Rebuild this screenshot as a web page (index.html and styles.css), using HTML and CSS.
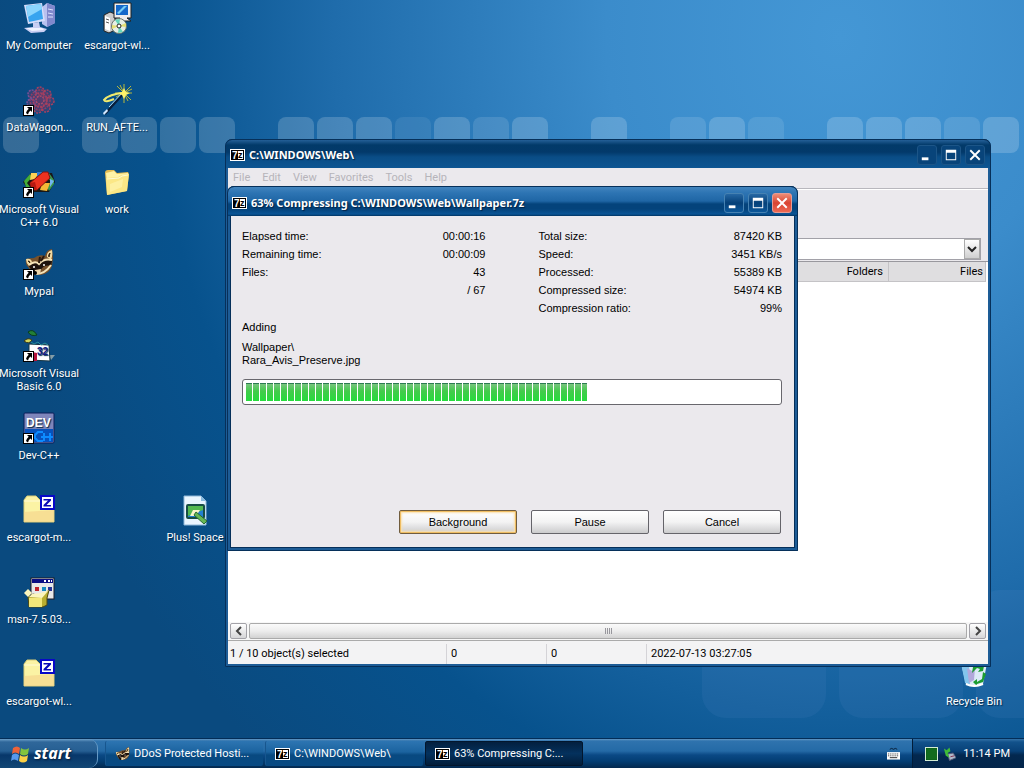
FILE: index.html
```html
<!DOCTYPE html>
<html lang="en">

<head>
    <meta charset="UTF-8">
    <meta name="viewport" content="width=device-width, initial-scale=1.0">
    <title>Desktop</title>
    <link rel="stylesheet" href="styles.css">
</head>

<body>
    <!-- Shared icons -->
    <svg class="defs" aria-hidden="true">
        <symbol id="shortcut" viewBox="0 0 11 11">
            <rect x="0.5" y="0.5" width="10" height="10" fill="#fff" stroke="#000" />
            <path d="M4 2h5v5L7.400 5.400Q5.500 7 5 9.500L3 8Q3.500 5.500 5.700 3.800z" fill="#000" />
        </symbol>
        <symbol id="seven-zip" viewBox="0 0 15 12">
            <rect width="15" height="12" fill="#fff" />
            <rect x="1" y="1" width="13" height="10" fill="#000" />
            <rect x="8" y="2" width="5" height="8" fill="#fff" />
            <text x="2" y="10" font-size="10" fill="#fff">7</text>
            <text x="8" y="9" font-size="9" fill="#000">z</text>
        </symbol>
        <symbol id="raccoon" viewBox="0 0 30 28">
            <path d="M2 10Q1 15 4 18l4 6 9 2q9-2 11-9l1-8-1-9q-6 1-7 7-6-2-11 2Q6 9 2 10z" fill="#76512c" />
            <path d="M2 10q5-1 6 3l-3 4q-3-3-3-7zM28 1q-6 2-5 7l4 3q2-5 1-10z" fill="#f1d9a0" />
            <path d="M4 12q2 0 2 2zM26 4q-2 2-1 4z" stroke="#3a2513" />
            <path d="M5 17q5-6 10-2 7-6 13-3l-1 5q-7-2-11 5l-7 2z" fill="#1d120c" />
            <path d="M5 16q6-5 10-1 5-6 13-4M12 25q9 0 15-9" fill="none" stroke="#f5e3b8" stroke-width="2" />
            <path d="M16 8l-1 6M20 7l-3 5" stroke="#2b190e" stroke-width="2" />
            <path d="M11 21l6-1-1 5-6 1z" fill="#eed7ad" />
            <circle cx="11" cy="24" r="2" fill="#000" />
            <circle cx="10" cy="18" r="1" fill="#fff" />
            <circle cx="20" cy="16" r="1" fill="#fff" />
        </symbol>
        <symbol id="zip-folder" viewBox="0 0 32 32">
            <path d="M1 28V6l3-4h9l4 4h14v22z" fill="#fbf3a4" stroke="#d9cc77" />
            <path d="M1 18l30-2v12H1z" fill="#f5d68d" opacity=".7" />
            <path d="M1 7h17" stroke="#fffbd8" />
            <rect x="18" y="2" width="13" height="13" fill="#fff" stroke="#0808c8" stroke-width="2" />
            <path d="M20.500 5H28v1.500L23.500 11H28v1.500H20.500V11L25 6.500h-4.500z" fill="#0808b8" />
        </symbol>
        <symbol id="minimize" viewBox="0 0 19 19">
            <rect x="4" y="12" width="7" height="3" fill="#fff" />
        </symbol>
        <symbol id="maximize" viewBox="0 0 19 19">
            <path d="M4 4h11v11H4zM5 7v7h9V7z" fill="#fff" fill-rule="evenodd" />
        </symbol>
        <symbol id="close" viewBox="0 0 19 19">
            <path d="M4.500 4.500l10 10M14.500 4.500l-10 10" stroke="#fff" stroke-width="2" />
        </symbol>
    </svg>

    <main class="desktop">
        <svg class="wallpaper" viewBox="0 0 1024 739" preserveAspectRatio="xMidYMin slice" aria-hidden="true">
            <g fill="#fff" fill-opacity=".18">
                <rect x="3" y="117" width="36" height="36" rx="8" />
                <rect x="82" y="117" width="36" height="36" rx="8" />
                <rect x="121" y="117" width="36" height="36" rx="8" />
                <rect x="160" y="117" width="36" height="36" rx="8" />
                <rect x="199" y="117" width="36" height="36" rx="8" />
                <rect x="278" y="117" width="36" height="36" rx="8" />
                <rect x="317" y="117" width="36" height="36" rx="8" />
                <rect x="356" y="117" width="36" height="36" rx="8" />
                <rect x="395" y="117" width="36" height="36" rx="8" fill-opacity=".08" />
                <rect x="434" y="117" width="36" height="36" rx="8" />
                <rect x="473" y="117" width="36" height="36" rx="8" fill-opacity=".12" />
                <rect x="512" y="117" width="36" height="36" rx="8" />
                <rect x="591" y="117" width="36" height="36" rx="8" />
                <rect x="670" y="117" width="36" height="36" rx="8" fill-opacity=".12" />
                <rect x="709" y="117" width="36" height="36" rx="8" />
                <rect x="748" y="117" width="36" height="36" rx="8" fill-opacity=".1" />
                <rect x="827" y="117" width="36" height="36" rx="8" />
                <rect x="866" y="117" width="36" height="36" rx="8" />
                <rect x="905" y="117" width="36" height="36" rx="8" />
                <rect x="944" y="117" width="36" height="36" rx="8" fill-opacity=".12" />
                <rect x="983" y="117" width="36" height="36" rx="8" />
            </g>
            <g fill="#5d8ac8" fill-opacity=".13">
                <rect x="702" y="590" width="124" height="128" rx="24" />
                <rect x="839" y="590" width="124" height="128" rx="24" />
                <rect x="976" y="590" width="124" height="128" rx="24" />
            </g>
        </svg>

        <div class="icons">
            <a class="icon" href="#">
                <svg viewBox="0 0 32 32">
                    <path d="M19 5l5-4 8 3v17l-8 4-5-3z" fill="#b9c1ef" />
                    <path d="M24 1l8 3v17l-8 4z" fill="#8088cc" />
                    <path d="M25 7l5 1M25 11l5 1M25 15l5 0" stroke="#dce2ff" />
                    <path d="M1 3l18-2 3 18-17 3z" fill="#d5ddfa" />
                    <path d="M3 4l15-2 2 15-14 3z" fill="#38a4ef" />
                    <path d="M3 4l15-2 1 5L5 15z" fill="#8bd5fd" />
                    <path d="M10 21l6-1 1 5 7 2-3 3-13 1-7-5 9-1z" fill="#c9cef3" />
                    <path d="M3 26l16 0 2 2-12 1z" fill="#f1f3ff" />
                </svg>
                <span>My Computer</span>
            </a>
            <a class="icon" href="#">
                <svg viewBox="0 0 32 32">
                    <path d="M3 13l6-3 5 2v16l-6 3-5-2z" fill="#ccc" stroke="#222" />
                    <path d="M4 14l5 2v13l-5-2z" fill="#fff" />
                    <path d="M5 17l3 1M5 20l3 1" stroke="#555" />
                    <path d="M13 1h17v15h-4l4 3H16l3-3h-6z" fill="#eee" stroke="#222" />
                    <path d="M15 3h12v10H15z" fill="#1469cb" />
                    <path d="M16 11l7-7h3l-8 8z" fill="#77cff7" />
                    <circle cx="18" cy="24" r="7.500" fill="#e7eee5" stroke="#67736b" />
                    <path d="M18 24l-4-6 5-1zM18 24l4 6-5 1z" fill="#64d7ba" />
                    <path d="M18 24l7-3v4zM18 24l-7 3v-4z" fill="#e4df73" />
                    <circle cx="18" cy="24" r="2" fill="#fff" stroke="#222" />
                </svg>
                <span>escargot-wl...</span>
            </a>
            <a class="icon" href="#">
                <svg viewBox="0 0 32 32">
                    <g fill="#6f3a68" fill-opacity=".4" stroke="#a8405f" stroke-width="1.500" stroke-dasharray="2 1">
                        <circle cx="17" cy="16" r="10" />
                        <circle cx="17" cy="16" r="4" stroke="#d8556a" />
                        <circle cx="17" cy="7" r="4" />
                        <circle cx="24" cy="10" r="4" />
                        <circle cx="27" cy="17" r="4" />
                        <circle cx="23" cy="24" r="4" />
                        <circle cx="15" cy="25" r="4" />
                        <circle cx="8" cy="19" r="4" stroke="#7b5198" />
                        <circle cx="9" cy="10" r="4" stroke="#7b5198" />
                        <circle cx="17" cy="16" r="7" />
                    </g>
                    <use href="#shortcut" x="0" y="21" width="11" height="11" />
                </svg>
                <span>DataWagon...</span>
            </a>
            <a class="icon" href="#">
                <svg viewBox="0 0 32 32">
                    <path d="M23 0v19M14 9h17M16 2l14 14M30 2L16 16M19 1l8 16M31 5l-16 8" stroke="#b8b83b" />
                    <path d="M23 9L4 30" stroke="#0a1d38" stroke-width="2" />
                    <path d="M21 9L8 23" stroke="#a9d3ed" />
                    <path d="M2 29l4-4 1 2-4 4z" fill="#d2e8ff" />
                    <path d="M23 9Q8 10 3 16q1 3 10-1" fill="none" stroke="#f1ea6d" stroke-width="2" />
                    <path d="M23 4l2 4 4 1-4 2-2 4-2-4-4-2 4-1z" fill="#fff36b" />
                </svg>
                <span>RUN_AFTE...</span>
            </a>
            <a class="icon" href="#">
                <svg viewBox="0 0 32 32">
                    <path d="M0 16l8-9h21l3 9-6 10H7z" fill="#181818" />
                    <path d="M1 15l6-7 2 3-5 6 3 4-3 3z" fill="#43ad39" />
                    <path d="M8 7h8l-4 6-5 1z" fill="#ffd154" />
                    <path d="M14 6h6l-6 6z" fill="#2d79d1" />
                    <path d="M26 7l5 7v4l-5 7-2-4 4-5-4-6z" fill="#3a9851" />
                    <path d="M27 13l4 2-4 6z" fill="#72b5f1" />
                    <path d="M19 17h8l-3 8-7-1z" fill="#f4b937" />
                    <path d="M7 17L20 6h5l2 6L14 24H9z" fill="#eb3220" stroke="#81150d" />
                    <path d="M7 17l5-1 2 8H9z" fill="#b71912" />
                    <use href="#shortcut" x="0" y="21" width="11" height="11" />
                </svg>
                <span>Microsoft Visual<br>C++ 6.0</span>
            </a>
            <a class="icon" href="#">
                <svg viewBox="0 0 32 32">
                    <path d="M4 7q0-3 3-3h6l3 3 11-1 1 2-2 17-20 4z" fill="#e5bd54" />
                    <path d="M5 7l8-2 3 3 11-1v5L6 16z" fill="#fff3a7" />
                    <path d="M5 12l12-1 3-2 8-1-2 17-20 4z" fill="#fbe786" />
                    <path d="M6 13l12-1 3-2 6-1" fill="none" stroke="#fffbd5" />
                    <path d="M9 18l13-5-1 8-12 5z" fill="#fff7b6" opacity=".6" />
                </svg>
                <span>work</span>
            </a>
            <a class="icon" href="#">
                <svg viewBox="0 0 32 32">
                    <use href="#raccoon" x="1" y="1" width="30" height="28" />
                    <use href="#shortcut" x="0" y="21" width="11" height="11" />
                </svg>
                <span>Mypal</span>
            </a>
            <a class="icon" href="#">
                <svg viewBox="0 0 32 32">
                    <path d="M5 2q5-4 9 3-6 2-9-3z" fill="#237f36" stroke="#083c20" />
                    <path d="M1 11q4-4 8-1-3 5-8 1z" fill="#d5d75d" stroke="#383817" />
                    <path d="M26 25h6l-4 5z" fill="#849da8" />
                    <path d="M6 14l20 1 1 16-21-1z" fill="#fff" stroke="#173541" />
                    <path d="M8 12l3 2 4-2 3 3 4-2 3 2" fill="none" stroke="#288d99" stroke-width="1" />
                    <path d="M9 22l5 1v8H9z" fill="#b7143c" />
                    <text x="14" y="25" font-size="10" fill="#101780">32</text>
                    <use href="#shortcut" x="0" y="21" width="11" height="11" />
                </svg>
                <span>Microsoft Visual<br>Basic 6.0</span>
            </a>
            <a class="icon" href="#">
                <svg viewBox="0 0 32 32">
                    <rect x="1" y="1" width="30" height="30" rx="1" fill="#7f86bb" stroke="#0b1c58" />
                    <rect x="2" y="17" width="28" height="13" fill="#0752bd" />
                    <text x="3" y="15" font-size="12" fill="#fff">DEV</text>
                    <path d="M20 20h-5l-3 3v3l3 3h5M21 21v8M18 25h6M27 21v8M24 25h6" fill="none" stroke="#0d8bff" stroke-width="2" />
                    <use href="#shortcut" x="0" y="21" width="11" height="11" />
                </svg>
                <span>Dev-C++</span>
            </a>
            <a class="icon" href="#">
                <svg viewBox="0 0 32 32"><use href="#zip-folder" /></svg>
                <span>escargot-m...</span>
            </a>
            <a class="icon" href="#">
                <svg viewBox="0 0 32 32">
                    <rect x="8" y="2" width="23" height="21" fill="#e8e8e8" stroke="#1b1b29" />
                    <rect x="9" y="3" width="21" height="4" fill="#090d83" />
                    <path d="M21 5h2M25 5h2M28 5h1" stroke="#fff" stroke-width="2" />
                    <rect x="12" y="11" width="4" height="4" fill="#be222a" />
                    <rect x="19" y="11" width="4" height="4" fill="#168ac0" />
                    <rect x="25" y="11" width="4" height="4" fill="#263497" />
                    <path d="M5 21l5-3 8 2 8-6-2 8v7l-4 2H6z" fill="#b9ae30" stroke="#4c4710" />
                    <path d="M6 22h13v9H6z" fill="#f2e77a" />
                    <path d="M6 21l13 1 7-8-8 3-9 1zM1 17l4-4 4 4-4 4z" fill="#fbf5bd" />
                </svg>
                <span>msn-7.5.03...</span>
            </a>
            <a class="icon" href="#">
                <svg viewBox="0 0 32 32"><use href="#zip-folder" /></svg>
                <span>escargot-wl...</span>
            </a>
            <a class="icon plus-space" href="#">
                <svg viewBox="0 0 32 32">
                    <path d="M5 2h17l5 5v24H5z" fill="#e9f5ff" stroke="#91b9d9" />
                    <path d="M22 2l5 5h-5z" fill="#88badd" />
                    <rect x="8" y="11" width="17" height="13" rx="1" fill="#217fd0" stroke="#174d45" stroke-width="2" />
                    <path d="M9 12h15v4L9 22z" fill="#53b951" />
                    <path d="M14 16h7l-4 6h-6z" fill="#faf5ca" />
                    <path d="M17 18l11 9-3 3-10-9z" fill="#66b755" stroke="#276b35" />
                </svg>
                <span>Plus! Space</span>
            </a>
        </div>

        <a class="icon recycle-bin" href="#">
            <svg viewBox="0 0 32 32">
                <path d="M3 5h26l-4 21q-8 5-17 0z" fill="#dceaf7" />
                <path d="M3 5l8 1 1 21-5-2z" fill="#83c5ec" />
                <path d="M9 10l5 3 3-3-1 12-5 3z" fill="#b2a8db" />
                <path d="M14 15l5-5 3 1-2 3 5-1 1-5-4-1-1-3-6 5zM25 14l-1 7-5 3v-3l-4 3 4 4v-2l6-2 3-8z" fill="#1b9c30" />
                <path d="M8 26q8 4 17 0" fill="none" stroke="#fff" stroke-width="2" />
            </svg>
            <span>Recycle Bin</span>
        </a>

        <!-- File manager window -->
        <section class="window file-manager">
            <header class="title-bar inactive">
                <svg class="app-icon"><use href="#seven-zip" /></svg>
                <h1>C:\WINDOWS\Web\</h1>
                <div class="window-buttons">
                    <button aria-label="Minimize"><svg><use href="#minimize" /></svg></button>
                    <button aria-label="Maximize"><svg><use href="#maximize" /></svg></button>
                    <button aria-label="Close"><svg><use href="#close" /></svg></button>
                </div>
            </header>
            <nav class="menu-bar">
                <button disabled>File</button>
                <button disabled>Edit</button>
                <button disabled>View</button>
                <button disabled>Favorites</button>
                <button disabled>Tools</button>
                <button disabled>Help</button>
            </nav>
            <div class="tool-bar"></div>
            <div class="address-bar">
                <select aria-label="Address"><option></option></select>
                <span class="drop-arrow">
                    <svg viewBox="0 0 10 7"><path d="M1 1l4 4 4-4" fill="none" stroke="#222" stroke-width="2" /></svg>
                </span>
            </div>
            <div class="file-list">
                <table>
                    <thead>
                        <tr>
                            <td></td>
                            <th>Folders</th>
                            <th>Files</th>
                        </tr>
                    </thead>
                </table>
            </div>
            <div class="scroll-bar">
                <button aria-label="Scroll left"><svg viewBox="0 0 8 10"><path d="M6 1L2 5l4 4" fill="none" stroke="#444" stroke-width="2" /></svg></button>
                <div class="thumb"><i></i><i></i><i></i><i></i></div>
                <button aria-label="Scroll right"><svg viewBox="0 0 8 10"><path d="M2 1l4 4-4 4" fill="none" stroke="#444" stroke-width="2" /></svg></button>
            </div>
            <footer class="status-bar">
                <span>1 / 10 object(s) selected</span>
                <span>0</span>
                <span>0</span>
                <span>2022-07-13 03:27:05</span>
            </footer>
        </section>

        <!-- Compression progress window -->
        <section class="window progress-window">
            <header class="title-bar">
                <svg class="app-icon"><use href="#seven-zip" /></svg>
                <h1>63% Compressing C:\WINDOWS\Web\Wallpaper.7z</h1>
                <div class="window-buttons">
                    <button aria-label="Minimize"><svg><use href="#minimize" /></svg></button>
                    <button aria-label="Maximize"><svg><use href="#maximize" /></svg></button>
                    <button class="close" aria-label="Close"><svg><use href="#close" /></svg></button>
                </div>
            </header>
            <div class="progress-body">
                <div class="stats">
                    <dl>
                        <dt>Elapsed time:</dt>
                        <dd>00:00:16</dd>
                        <dt>Remaining time:</dt>
                        <dd>00:00:09</dd>
                        <dt>Files:</dt>
                        <dd>43</dd>
                        <dd>/ 67</dd>
                    </dl>
                    <dl>
                        <dt>Total size:</dt>
                        <dd>87420 KB</dd>
                        <dt>Speed:</dt>
                        <dd>3451 KB/s</dd>
                        <dt>Processed:</dt>
                        <dd>55389 KB</dd>
                        <dt>Compressed size:</dt>
                        <dd>54974 KB</dd>
                        <dt>Compression ratio:</dt>
                        <dd>99%</dd>
                    </dl>
                </div>
                <label class="action" for="progress">Adding</label>
                <p class="current-file">Wallpaper\<br>Rara_Avis_Preserve.jpg</p>
                <progress id="progress" value="43" max="67"></progress>
                <div class="actions">
                    <button class="default">Background</button>
                    <button>Pause</button>
                    <button>Cancel</button>
                </div>
            </div>
        </section>
    </main>

    <footer class="taskbar">
        <button class="start">
            <svg viewBox="0 0 20 20">
                <path d="M3 4q4-3 7 0L9 10q-4-3-7 0z" fill="#ee6339" />
                <path d="M11 4q4 3 8 0l-1 6q-4 3-8 0z" fill="#83c43d" />
                <path d="M2 11q3-3 7 0l-1 6q-4-3-7 0z" fill="#5799ec" />
                <path d="M10 11q4 3 8 0l-1 6q-4 3-8 0z" fill="#fbd044" />
            </svg>
            start
        </button>
        <div class="tasks">
            <button class="task">
                <svg><use href="#raccoon" /></svg>
                DDoS Protected Hosti...
            </button>
            <button class="task">
                <svg><use href="#seven-zip" /></svg>
                C:\WINDOWS\Web\
            </button>
            <button class="task active">
                <svg><use href="#seven-zip" /></svg>
                63% Compressing C:...
            </button>
        </div>
        <svg class="keyboard" viewBox="0 0 14 13">
            <path d="M3 2l2-1 2 1 2-1 2 1" fill="none" stroke="#071b32" />
            <rect y="5" width="14" height="8" fill="#fff" />
            <path d="M1 7h12M1 9h12" stroke="#222" stroke-dasharray="1 1" />
            <path d="M3 11h8" stroke="#222" />
        </svg>
        <div class="tray">
            <svg viewBox="0 0 13 14">
                <rect x="0.5" y="0.5" width="12" height="13" fill="#075b14" stroke="#d4ecd3" />
                <path d="M3 1v12M5 1v12M7 1v12M9 1v12M11 1v12M1 3h11M1 5h11M1 7h11M1 9h11M1 11h11" stroke="#27832c" stroke-width=".5" />
            </svg>
            <svg viewBox="0 0 14 14">
                <path d="M5 7l6-1 3 5-7 3z" fill="#aeb9ca" stroke="#515a76" />
                <path d="M8 10l4-1" stroke="#842c4a" />
                <path d="M1 1l3 2 3-3 1 4-3 2 2 5-4-2z" fill="#40bc38" />
            </svg>
            <time>11:14 PM</time>
        </div>
    </footer>
</body>

</html>
```
FILE: styles.css
```css
* {
    box-sizing: border-box;
}

body {
    display: flex;
    flex-direction: column;
    height: 100vh;
    margin: 0;
    overflow: hidden;
    font-family: Roboto, Tahoma, sans-serif;
    font-size: 11px;
    line-height: 13px;
    color: black;
}

button,
select {
    font: inherit;
    color: inherit;
    margin: 0;
    padding: 0;
    border: none;
    background: none;
}

svg text {
    font-family: "Liberation Sans", Arial, sans-serif;
    font-weight: bold;
}

.defs {
    display: none;
}

.desktop {
    position: relative;
    flex: 1;
    min-height: 0;
    background: radial-gradient(ellipse 76% 120% at 82% 5%, #4497d5 0%, #3b8ccb 30%, #1f6cab 65%, #07528d 88%, #0a4a7f 110%);
}

.wallpaper {
    position: absolute;
    width: 100%;
    height: 100%;
}

/* Desktop icons */
.icons {
    position: relative;
    display: grid;
    grid-template-columns: repeat(3, 78px);
    grid-auto-rows: 82px;
}

.icon {
    display: flex;
    flex-direction: column;
    align-items: center;
    gap: 5px;
    width: 78px;
    padding-top: 2px;
    color: white;
    text-align: center;
    text-decoration: none;
    text-shadow: 1px 1px 1px #032a4c;
    white-space: nowrap;
}

.icons .icon {
    grid-column: 1;
}

.icons .icon:nth-child(2),
.icons .icon:nth-child(4),
.icons .icon:nth-child(6) {
    grid-column: 2;
}

.icons .plus-space:last-child {
    grid-row: 7;
    grid-column: 3;
}

.icon svg {
    width: 32px;
    height: 32px;
}

.recycle-bin {
    position: absolute;
    right: 11px;
    bottom: 30px;
}

/* Windows */
.window {
    position: absolute;
    display: flex;
    flex-direction: column;
    border: 3px solid #1d5c96;
    border-top: none;
    border-radius: 7px 7px 0 0;
    background-color: #ebe9ed;
    outline: 1px solid #06305a;
    outline-offset: -1px;
}

.file-manager {
    top: 139px;
    right: 33px;
    bottom: 71px;
    left: 225px;
}

.progress-window {
    top: 186px;
    right: 226px;
    left: 227px;
    box-shadow: inset 0 0 0 1px #06305a;
}

.title-bar {
    display: flex;
    align-items: center;
    gap: 4px;
    height: 30px;
    margin: 0 -2px;
    padding: 2px 5px 0 4px;
    border-top: 1px solid #06305a;
    border-radius: 6px 6px 0 0;
    background: linear-gradient(#4284bd 0, #2d74b3 6px, #1f66a5 14px, #04437b 17px, #04437b 22px, #0a5596 27px, #003462 100%);
    color: white;
}

.title-bar.inactive {
    height: 29px;
    background: linear-gradient(#245f97 0, #023a69 5px, #03396a 12px, #0a4d86 17px, #0d5592 100%);
}

.title-bar h1 {
    flex: 1;
    margin: 0;
    font-family: "Noto Sans", Tahoma, sans-serif;
    font-size: 11px;
    line-height: 16px;
    text-shadow: 1px 1px 1px #022346;
}

.app-icon {
    width: 15px;
    height: 12px;
}

.window-buttons {
    display: flex;
    gap: 4px;
}

.window-buttons button {
    width: 20px;
    height: 20px;
    border: 1px solid #4682b2;
    border-radius: 3px;
    background: linear-gradient(#2668a4, #054078 50%, #0b579a);
}

.inactive .window-buttons button {
    border-color: #1c5587;
    background: #08447a;
}

.window-buttons svg {
    display: block;
    width: 18px;
    height: 18px;
}

.window-buttons .close {
    border-color: #e69b93;
    background: linear-gradient(#ee8c75, #d94432 50%, #ed6953);
}

.menu-bar {
    display: flex;
    gap: 12px;
    height: 21px;
    padding-left: 5px;
    border-bottom: 1px solid #b8b7bd;
    color: #b6b4ba;
}

.menu-bar button {
    height: 19px;
}

.tool-bar {
    height: 49px;
    border-top: 1px solid white;
}

.address-bar {
    position: relative;
    height: 23px;
    padding-right: 7px;
}

.address-bar select {
    display: block;
    width: 100%;
    height: 22px;
    border: 1px solid #a2a1a8;
    background-color: white;
    appearance: none;
}

.drop-arrow {
    position: absolute;
    top: 1px;
    right: 8px;
    display: flex;
    align-items: center;
    justify-content: center;
    width: 16px;
    height: 20px;
    border: 1px solid #aaa;
    background: linear-gradient(white, #cfcfcf);
    pointer-events: none;
}

.drop-arrow svg {
    width: 10px;
    height: 7px;
}

.file-list {
    flex: 1;
    padding-right: 2px;
    border-top: 1px solid #99989e;
    background-color: white;
}

.file-list table {
    width: 100%;
    border-spacing: 0;
    table-layout: fixed;
    background-color: #dfdee0;
}

.file-list th,
.file-list td {
    height: 20px;
    padding: 0 2px 0 5px;
    border-right: 1px solid #c4c3c6;
    border-bottom: 1px solid #c4c3c6;
    font-weight: normal;
    text-align: right;
}

.file-list th {
    width: 97px;
}

.file-list th:nth-child(2) {
    padding-right: 5px;
}

.scroll-bar {
    display: flex;
    gap: 2px;
    height: 19px;
    padding: 1px 2px;
    background-color: #f7f7f7;
    border-bottom: 1px solid #aaa;
}

.scroll-bar button {
    display: flex;
    align-items: center;
    justify-content: center;
    width: 17px;
    border: 1px solid #a3a2a8;
    border-radius: 2px;
    background: linear-gradient(white, #d6d6d8);
}

.scroll-bar svg {
    width: 8px;
    height: 10px;
}

.thumb {
    display: flex;
    flex: 1;
    gap: 1px;
    align-items: center;
    justify-content: center;
    border: 1px solid #aaa;
    border-radius: 2px;
    background: linear-gradient(#fafafa, #ededed 50%, #d2d2d2);
}

.thumb i {
    width: 1px;
    height: 6px;
    background-color: #98979d;
}

.status-bar {
    display: grid;
    grid-template-columns: 218px 100px 100px 1fr;
    height: 23px;
    padding-top: 3px;
    background-color: #f3f3f4;
}

.status-bar span {
    padding-left: 4px;
    border-left: 1px solid #d4d3d7;
    line-height: 20px;
}

.status-bar span:first-child {
    padding-left: 2px;
    border-left: none;
}

/* Progress window contents */
.progress-body {
    display: flex;
    flex-direction: column;
    padding: 11px 13px 14px 12px;
    font-family: "Liberation Sans", Arial, sans-serif;
}

.stats {
    display: grid;
    grid-template-columns: 1fr 1fr;
    gap: 53px;
    line-height: 18px;
}

.stats dl {
    display: grid;
    grid-template-columns: 1fr auto;
    align-content: start;
    margin: 0;
}

.stats dd {
    grid-column: 2;
    margin: 0;
    text-align: right;
}

.action {
    line-height: 20px;
}

.current-file {
    margin: 4px 0 12px;
}

progress {
    display: block;
    width: 100%;
    height: 26px;
    padding: 3px;
    border: 1px solid #68676d;
    border-radius: 3px;
    background-color: white;
    appearance: none;
}

progress::-webkit-progress-bar {
    background-color: white;
}

progress::-webkit-progress-value {
    background:
        repeating-linear-gradient(90deg, transparent 0 6px, white 6px 7px),
        linear-gradient(#2c7b51 0 1px, #78c47e 1px, #43cb4c 8px, #25dc3d 18px, #23864b 19px);
}

.actions {
    display: flex;
    justify-content: flex-end;
    gap: 14px;
    margin-top: 105px;
    padding-right: 1px;
}

.actions button {
    width: 118px;
    height: 24px;
    border: 1px solid #65646a;
    border-radius: 2px;
    background: linear-gradient(white, #f3f3f3 50%, #cbcbcd);
}

.actions .default {
    border-color: #705c3e;
    box-shadow: inset 0 0 0 1px #efbd62, inset 0 0 2px 2px #fae0ae;
}

/* Taskbar */
.taskbar {
    display: flex;
    align-items: stretch;
    height: 30px;
    border-top: 1px solid #032d57;
    background: linear-gradient(#6498c5 0, #2f73ae 2px, #246aa6 12px, #0a4985 16px, #033e74 22px, #03294f 100%);
    color: white;
}

.start {
    display: flex;
    align-items: center;
    gap: 4px;
    width: 98px;
    padding-left: 10px;
    border-right: 1px solid #6599c5;
    border-radius: 0 9px 9px 0;
    background: linear-gradient(#6c9fc9 0, #2f679a 3px, #265f93 12px, #07376a 16px, #124775 100%);
    font-family: "Noto Sans", Tahoma, sans-serif;
    font-size: 16px;
    font-weight: bold;
    font-style: italic;
    text-shadow: 1px 1px 2px #021d38;
}

.start svg {
    width: 20px;
    height: 20px;
}

.tasks {
    display: flex;
    flex: 1;
    gap: 2px;
    padding: 2px 0 2px 7px;
}

.task {
    display: flex;
    align-items: center;
    gap: 4px;
    width: 158px;
    padding-left: 9px;
    border-left: 1px solid #17568e;
    border-radius: 2px;
    background: linear-gradient(#2d75b2 0, #1b639f 11px, #084980 14px, #084a83 100%);
    white-space: nowrap;
}

.task.active {
    border: 1px solid #02162d;
    background: linear-gradient(#03203f, #04315d 50%, #021e3b);
}

.task svg {
    width: 15px;
    height: 14px;
}

.keyboard {
    align-self: center;
    width: 13px;
    height: 13px;
    margin-right: 12px;
}

.tray {
    display: flex;
    align-items: center;
    gap: 5px;
    padding: 0 14px 0 12px;
    border-left: 1px solid #011c38;
    background: linear-gradient(#3472a8 0, #12528b 3px, #084178 12px, #03284f 16px, #03254a 100%);
}

.tray svg {
    width: 13px;
    height: 14px;
}

.tray time {
    padding-left: 2px;
}
```
